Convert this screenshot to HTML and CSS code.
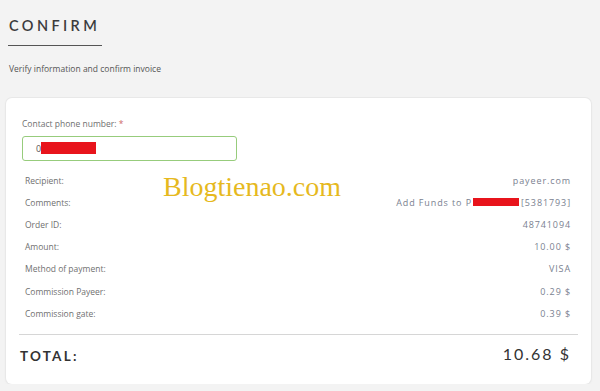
FILE: index.html
```html
<!doctype html>
<html>
<head>
<meta charset="utf-8">
<title>Confirm</title>
<link rel="stylesheet" href="styles.css">
</head>
<body>
<div class="head">
	<h1 class="title">CONFIRM</h1>
	<p class="sub">Verify information and confirm invoice</p>
</div>
<div class="card">
	<div class="lbl">Contact phone number: <span class="req">*</span></div>
	<div class="inp"><span class="digit">0</span><span class="mask mask-phone"></span></div>
	<ul class="rows">
		<li><span>Recipient:</span><b>payeer.com</b></li>
		<li><span>Comments:</span><b>Add Funds to P<span class="mask mask-acc"></span>[5381793]</b></li>
		<li><span>Order ID:</span><b>48741094</b></li>
		<li><span>Amount:</span><b>10.00 $</b></li>
		<li><span>Method of payment:</span><b>VISA</b></li>
		<li><span>Commission Payeer:</span><b>0.29 $</b></li>
		<li><span>Commission gate:</span><b>0.39 $</b></li>
	</ul>
	<div class="total"><span>TOTAL:</span><b>10.68 $</b></div>
	<div class="mark">Blogtienao.com</div>
</div>
</body>
</html>
```
FILE: styles.css
```css
*{margin:0;padding:0;list-style:none;box-sizing:border-box;}
body{background:#f3f3f3;font-family:"Open Sans","DejaVu Sans",sans-serif;color:#707070;}
.head{padding-left:8px;}
.title{display:inline-block;width:94px;margin-top:18px;padding:0 0 12px 1px;border-bottom:1px solid #555;font-family:Lato,"Liberation Sans",sans-serif;font-weight:600;font-size:14.5px;line-height:15px;letter-spacing:3.4px;color:#3b3b3d;white-space:nowrap;}
.sub{margin-top:17px;padding-left:1px;font-size:8.5px;line-height:12px;color:#555;}
.card{position:relative;margin:23px 0 0 6px;width:585px;height:286px;padding:20px 20px 13px 16px;background:#fff;border-radius:6px;box-shadow:0 0 0 1px #e8e8e8,0 1px 3px rgba(0,0,0,.06);}
.lbl{font-size:8.5px;line-height:12px;color:#707070;}
.req{color:#c66;}
.inp{display:flex;align-items:center;margin-top:6px;width:215px;height:25px;padding-left:13px;border:1px solid #97cc7c;border-radius:3px;font-size:9px;color:#555;}
.mask{display:inline-block;background:#e8141c;}
.mask-phone{width:55px;height:12px;margin-top:-1px;}
.mask-acc{width:46px;height:8px;margin:0 2px 0 1px;}
.rows{margin-top:8px;padding-left:3px;}
.rows li{display:flex;justify-content:space-between;align-items:center;height:22.2px;font-size:8.5px;}
.rows b{font-weight:500;font-size:9px;letter-spacing:.9px;color:#7a8190;display:flex;align-items:center;}
.total{display:flex;justify-content:space-between;align-items:center;margin:10px -7px 0 -3px;padding:0 7px 0 1px;height:30px;border-top:1px solid #d6d6d6;box-sizing:content-box;font-family:Lato,"Liberation Sans",sans-serif;color:#333;}
.total span{font-size:13.5px;font-weight:700;letter-spacing:2.2px;margin-top:11px;}
.total b{font-size:16px;font-weight:400;letter-spacing:2px;margin-top:7px;}
.mark{position:absolute;left:157px;top:73px;font-family:"Liberation Serif",serif;font-size:28px;color:#e6b91e;}
```
